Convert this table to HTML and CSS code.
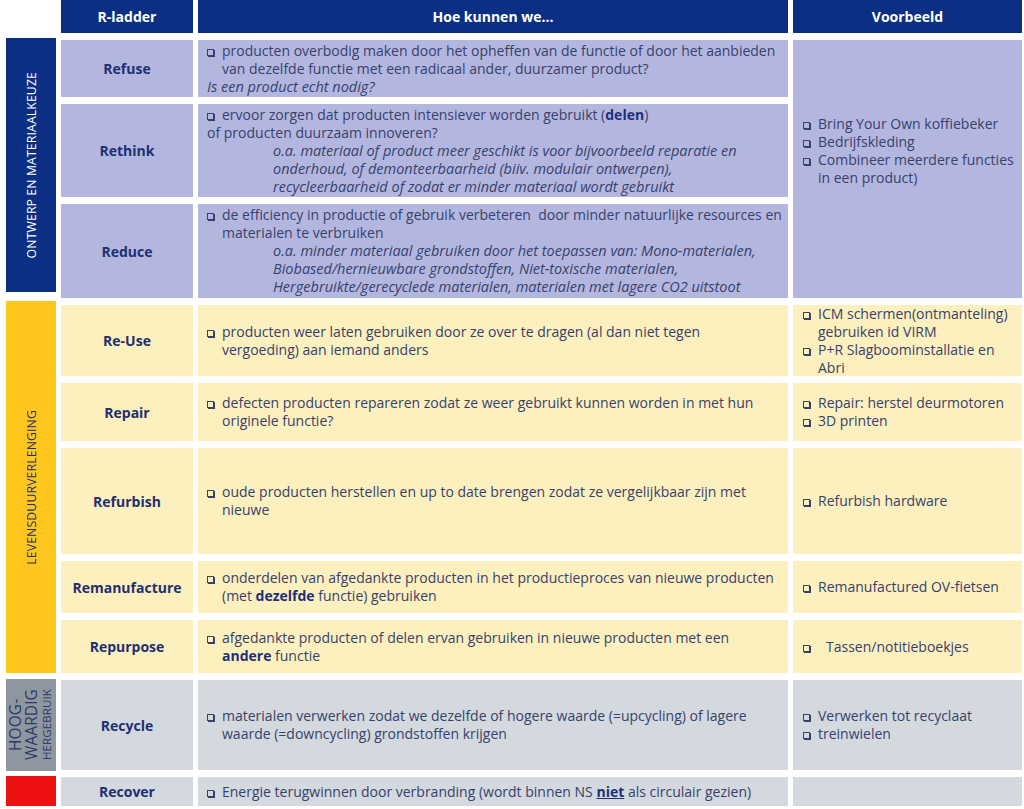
FILE: index.html
```html
<!DOCTYPE html>
<html lang="nl">
<head>
<meta charset="utf-8">
<title>R-ladder</title>
<link rel="stylesheet" href="styles.css">
</head>
<body>
<div class="ladder">
  <div class="grp grp-design"><span class="vt">ONTWERP EN MATERIAALKEUZE</span></div>
  <div class="grp grp-life"><span class="vt">LEVENSDUURVERLENGING</span></div>
  <div class="grp grp-high"><span class="vt vt3"><span class="big">HOOG-</span><span class="big">WAARDIG</span><span class="small">HERGEBRUIK</span></span></div>
  <div class="grp grp-red"></div>
  <div class="ex ex-blue">
    <p class="li"><span class="b"></span>Bring Your Own koffiebeker</p>
    <p class="li"><span class="b"></span>Bedrijfskleding</p>
    <p class="li"><span class="b"></span>Combineer meerdere functies in een product)</p>
  </div>

  <div class="blank"></div>
  <div class="hd">R-ladder</div>
  <div class="hd">Hoe kunnen we...</div>
  <div class="hd">Voorbeeld</div>

  <div class="nm blue">Refuse</div>
  <div class="ct blue">
    <p class="li"><span class="b"></span>producten overbodig maken door het opheffen van de functie of door het aanbieden<br>van dezelfde functie met een radicaal ander, duurzamer product?</p>
    <p class="it">Is een product echt nodig?</p>
  </div>

  <div class="nm blue">Rethink</div>
  <div class="ct blue">
    <p class="li"><span class="b"></span>ervoor zorgen dat producten intensiever worden gebruikt (<strong>delen</strong>)</p>
    <p>of producten duurzaam innoveren?</p>
    <p class="it sub">o.a. materiaal of product meer geschikt is voor bijvoorbeeld reparatie en<br>onderhoud, of demonteerbaarheid (biiv. modulair ontwerpen),<br>recycleerbaarheid of zodat er minder materiaal wordt gebruikt</p>
  </div>

  <div class="nm blue">Reduce</div>
  <div class="ct blue">
    <p class="li"><span class="b"></span>de efficiency in productie of gebruik verbeteren&nbsp; door minder natuurlijke resources en<br>materialen te verbruiken</p>
    <p class="it sub">o.a. minder materiaal gebruiken door het toepassen van: Mono-materialen,<br>Biobased/hernieuwbare grondstoffen, Niet-toxische materialen,<br>Hergebruikte/gerecyclede materialen, materialen met lagere CO2 uitstoot</p>
  </div>

  <div class="nm yel">Re-Use</div>
  <div class="ct yel">
    <p class="li"><span class="b"></span>producten weer laten gebruiken door ze over te dragen (al dan niet tegen<br>vergoeding) aan iemand anders</p>
  </div>
  <div class="ex yel">
    <p class="li"><span class="b"></span>ICM schermen(ontmanteling) gebruiken id VIRM</p>
    <p class="li"><span class="b"></span>P+R Slagboominstallatie en Abri</p>
  </div>

  <div class="nm yel">Repair</div>
  <div class="ct yel">
    <p class="li"><span class="b"></span>defecten producten repareren zodat ze weer gebruikt kunnen worden in met hun<br>originele functie?</p>
  </div>
  <div class="ex yel">
    <p class="li"><span class="b"></span>Repair: herstel deurmotoren</p>
    <p class="li"><span class="b"></span>3D printen</p>
  </div>

  <div class="nm yel">Refurbish</div>
  <div class="ct yel">
    <p class="li"><span class="b"></span>oude producten herstellen en up to date brengen zodat ze vergelijkbaar zijn met<br>nieuwe</p>
  </div>
  <div class="ex yel">
    <p class="li"><span class="b"></span>Refurbish hardware</p>
  </div>

  <div class="nm yel">Remanufacture</div>
  <div class="ct yel">
    <p class="li"><span class="b"></span>onderdelen van afgedankte producten in het productieproces van nieuwe producten<br>(met <strong>dezelfde</strong> functie) gebruiken</p>
  </div>
  <div class="ex yel">
    <p class="li"><span class="b"></span>Remanufactured OV-fietsen</p>
  </div>

  <div class="nm yel">Repurpose</div>
  <div class="ct yel">
    <p class="li"><span class="b"></span>afgedankte producten of delen ervan gebruiken in nieuwe producten met een<br><strong>andere</strong> functie</p>
  </div>
  <div class="ex yel">
    <p class="li wide"><span class="b"></span>Tassen/notitieboekjes</p>
  </div>

  <div class="nm gry">Recycle</div>
  <div class="ct gry">
    <p class="li"><span class="b"></span>materialen verwerken zodat we dezelfde of hogere waarde (=upcycling) of lagere<br>waarde (=downcycling) grondstoffen krijgen</p>
  </div>
  <div class="ex gry">
    <p class="li"><span class="b"></span>Verwerken tot recyclaat</p>
    <p class="li"><span class="b"></span>treinwielen</p>
  </div>

  <div class="nm gry">Recover</div>
  <div class="ct gry">
    <p class="li"><span class="b"></span>Energie terugwinnen door verbranding (wordt binnen NS <strong class="u">niet</strong> als circulair gezien)</p>
  </div>
  <div class="ex gry"></div>
</div>
</body>
</html>
```

FILE: styles.css
```css
* { box-sizing: border-box; }

html, body {
  margin: 0;
  padding: 0;
  background: #ffffff;
}

body {
  font-family: "Open Sans", "Liberation Sans", sans-serif;
  color: #37416b;
  width: 1024px;
  height: 809px;
  overflow: hidden;
}

p { margin: 0; }

.ladder {
  display: grid;
  grid-template-columns: 50px 132px 590px 229px;
  grid-template-rows: 33px 57px 93px 94px 71px 58px 106px 52px 53px 90px 29px;
  column-gap: 5px;
  row-gap: 7px;
  padding-left: 6px;
}

/* header */
.hd {
  background: #0b2f83;
  color: #ffffff;
  font-weight: 700;
  font-size: 14px;
  display: flex;
  align-items: center;
  justify-content: center;
}

/* group labels */
.grp {
  grid-column: 1;
  display: flex;
  align-items: center;
  justify-content: center;
}
.grp-design {
  grid-row: 2 / 5;
  background: #0b2f83;
  color: #ffffff;
  margin-top: -2px;
  margin-bottom: 6px;
}
.grp-life {
  grid-row: 5 / 10;
  background: #ffc61e;
  color: #1f3170;
  margin-top: -4px;
}
.grp-high {
  grid-row: 10 / 11;
  background: #8e979f;
  color: #2c3a66;
  margin-top: -1px;
  margin-bottom: -1px;
}
.grp-red {
  grid-row: 11 / 12;
  background: #ee1111;
  margin-top: -1px;
}

.vt {
  writing-mode: vertical-rl;
  transform: rotate(180deg);
  font-size: 12.3px;
  letter-spacing: 0.1px;
  white-space: nowrap;
}
.vt3 {
  display: flex;
  flex-direction: column;
  align-items: center;
  text-align: center;
}
.vt3 .big {
  font-size: 15.5px;
  line-height: 16px;
}
.vt3 .small {
  font-size: 11.5px;
  line-height: 16px;
}

/* colours */
.blue { background: #b3b7e0; }
.yel  { background: #fdf0bf; }
.gry  { background: #d3d9de; }

/* R-ladder names */
.nm {
  display: flex;
  align-items: center;
  justify-content: center;
  font-weight: 700;
  font-size: 14px;
  color: #1d2f72;
}

/* content cells */
.ct {
  display: flex;
  flex-direction: column;
  justify-content: center;
  padding-left: 9px;
  padding-right: 2px;
  font-size: 14px;
  line-height: 18px;
  white-space: nowrap;
}
.ct strong {
  color: #1d2f78;
  font-weight: 700;
}
.u { text-decoration: underline; }

.li {
  padding-left: 15px;
  text-indent: -15px;
}
.b {
  display: inline-block;
  width: 7px;
  height: 7px;
  border: 1px solid currentColor;
  box-shadow: 1px 1px 0 currentColor;
  margin-right: 8px;
  text-indent: 0;
  vertical-align: 0;
}
.it { font-style: italic; font-size: 14.5px; }
.sub { padding-left: 66px; }

/* example cells */
.ex {
  display: flex;
  flex-direction: column;
  justify-content: center;
  padding-left: 10px;
  font-size: 14px;
  line-height: 18px;
}
.ex-blue {
  grid-column: 4;
  grid-row: 2 / 5;
  background: #b3b7e0;
  justify-content: flex-start;
  padding-top: 75px;
}
.wide .b { margin-right: 16px; }
```
